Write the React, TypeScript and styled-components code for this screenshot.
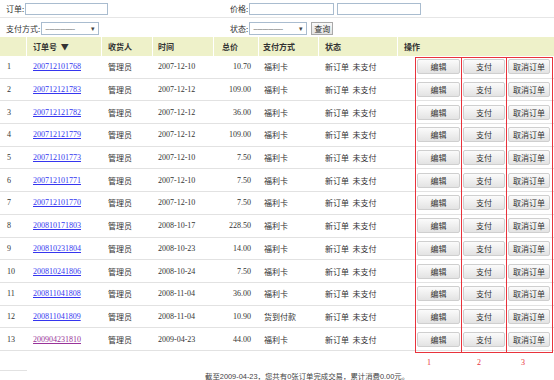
import styled, { createGlobalStyle } from 'styled-components';

const GlobalStyle = createGlobalStyle`
  body {
    margin: 0;
    background: #ffffff;
    font-family: "Liberation Serif", "Noto Sans CJK SC", serif;
    font-size: 8px;
    color: #333333;
  }
`;

const COLS = '27px 75px 51px 61px 45px 60px 79px 156px';

const orders = [
  { no: '200712101768', date: '2007-12-10', total: '10.70', pay: '福利卡' },
  { no: '200712121783', date: '2007-12-12', total: '109.00', pay: '福利卡' },
  { no: '200712121782', date: '2007-12-12', total: '36.00', pay: '福利卡' },
  { no: '200712121779', date: '2007-12-12', total: '109.00', pay: '福利卡' },
  { no: '200712101773', date: '2007-12-10', total: '7.50', pay: '福利卡' },
  { no: '200712101771', date: '2007-12-10', total: '7.50', pay: '福利卡' },
  { no: '200712101770', date: '2007-12-10', total: '7.50', pay: '福利卡' },
  { no: '200810171803', date: '2008-10-17', total: '228.50', pay: '福利卡' },
  { no: '200810231804', date: '2008-10-23', total: '14.00', pay: '福利卡' },
  { no: '200810241806', date: '2008-10-24', total: '7.50', pay: '福利卡' },
  { no: '200811041808', date: '2008-11-04', total: '36.00', pay: '福利卡' },
  { no: '200811041809', date: '2008-11-04', total: '10.90', pay: '货到付款' },
  { no: '200904231810', date: '2009-04-23', total: '44.00', pay: '福利卡', visited: true },
];

const Page = styled.div`
  width: 554px;
  height: 380px;
  overflow: hidden;
`;

const Filters = styled.div`
  display: flex;
  flex-direction: column;
`;

const FilterRow = styled.div<{ $line?: boolean }>`
  display: flex;
  align-items: center;
  height: 17px;
  border-bottom: ${(p) => (p.$line ? '1px solid #e6e6e6' : 'none')};
  margin-bottom: ${(p) => (p.$line ? '2px' : '0')};
`;

const FilterHalf = styled.div<{ $w?: number }>`
  display: flex;
  align-items: center;
  gap: 3px;
  width: ${(p) => (p.$w ? `${p.$w}px` : 'auto')};
  padding-left: 6px;
  box-sizing: border-box;
`;

const Label = styled.span`
  font-family: "Noto Sans CJK SC", sans-serif;
  font-size: 8px;
  color: #333;
  white-space: nowrap;
  margin-right: -2px;
`;

const TextInput = styled.input<{ $w: number }>`
  width: ${(p) => p.$w}px;
  height: 12px;
  box-sizing: border-box;
  border: 1px solid #a9bccf;
  padding: 0;
  margin: 0;
  background: #fff;
`;

const FakeSelect = styled.div<{ $w: number }>`
  width: ${(p) => p.$w}px;
  height: 13px;
  box-sizing: border-box;
  border: 1px solid #a9bccf;
  display: flex;
  align-items: center;
  justify-content: space-between;
  padding: 0 4px 0 3px;
  font-size: 7px;
  color: #444;
  letter-spacing: -0.5px;
`;

const SmallButton = styled.button`
  height: 13px;
  padding: 0 2px;
  margin-left: 1px;
  border: 1px solid #a9a9a9;
  background: linear-gradient(#fafafa, #e2e2e2);
  font-family: "Noto Sans CJK SC", sans-serif;
  font-size: 8px;
  line-height: 11px;
  color: #333;
`;

const TableWrap = styled.div`
  position: relative;
`;

const HeadRow = styled.div`
  display: grid;
  grid-template-columns: ${COLS};
  height: 19px;
  background: #eef1c9;
`;

const HeadCell = styled.div<{ $pad?: number }>`
  display: flex;
  align-items: center;
  padding-left: ${(p) => p.$pad ?? 6}px;
  border-right: 1px solid #ffffff;
  font-family: "Noto Sans CJK SC", sans-serif;
  font-weight: bold;
  font-size: 8px;
  color: #333;
  white-space: nowrap;
  &:last-child {
    border-right: none;
  }
`;

const Row = styled.div`
  display: grid;
  grid-template-columns: ${COLS};
  height: 22.7px;
  box-sizing: border-box;
  border-bottom: 1px solid #e2e2e2;
`;

const Cell = styled.div<{ $pad?: number; $right?: boolean; $cjk?: boolean }>`
  display: flex;
  align-items: center;
  justify-content: ${(p) => (p.$right ? 'flex-end' : 'flex-start')};
  padding-left: ${(p) => (p.$right ? 0 : p.$pad ?? 6)}px;
  padding-right: ${(p) => (p.$right ? 8 : 0)}px;
  font-family: ${(p) =>
    p.$cjk ? '"Noto Sans CJK SC", sans-serif' : '"Liberation Serif", "Noto Sans CJK SC", serif'};
  font-size: 8px;
  color: #333;
  white-space: nowrap;
`;

const OrderLink = styled.a<{ $visited?: boolean }>`
  color: ${(p) => (p.$visited ? '#993399' : '#3535ef')};
  text-decoration: underline;
  font-family: "Liberation Serif", serif;
  font-size: 8px;
`;

const Actions = styled.div`
  display: flex;
  align-items: center;
  gap: 3px;
  padding-left: 19px;
`;

const ActionButton = styled.button<{ $w: number }>`
  width: ${(p) => p.$w}px;
  height: 15px;
  padding: 0;
  border: 1px solid #cfcfcf;
  border-radius: 2px;
  background: linear-gradient(#fbfbfb, #e3e3e3);
  font-family: "Noto Sans CJK SC", sans-serif;
  font-size: 8px;
  color: #333;
`;

/* red annotation frames drawn over the action column */
const Marks = styled.div`
  position: absolute;
  top: 20px;
  left: 415px;
  display: flex;
  height: 296px;
  pointer-events: none;
`;

const MarkBox = styled.div<{ $w: number; $first?: boolean }>`
  width: ${(p) => p.$w}px;
  height: 100%;
  box-sizing: border-box;
  border-top: 1px solid #e8333c;
  border-bottom: 1px solid #e8333c;
  border-right: 1px solid #e8333c;
  border-left: ${(p) => (p.$first ? '1px solid #e8333c' : 'none')};
`;

const MarkLabels = styled.div`
  display: flex;
  padding-left: 427px;
  height: 14px;
  margin-top: 5px;
`;

const MarkLabel = styled.div<{ $w: number }>`
  width: ${(p) => p.$w}px;
  color: #e8333c;
  font-family: "Liberation Serif", serif;
  font-size: 8px;
  line-height: 14px;
`;

const Footer = styled.div`
  display: flex;
  align-items: center;
  height: 12px;
`;

const Stub = styled.div`
  width: 27px;
  border-top: 1px solid #e2e2e2;
  align-self: flex-start;
`;

const Summary = styled.div`
  padding-left: 178px;
  font-family: "Liberation Sans", "Noto Sans CJK SC", sans-serif;
  font-size: 7.4px;
  color: #444;
  white-space: nowrap;
`;

export default function App() {
  return (
    <Page>
      <GlobalStyle />
      <Filters>
        <FilterRow $line>
          <FilterHalf $w={224}>
            <Label>订单:</Label>
            <TextInput $w={83} />
          </FilterHalf>
          <FilterHalf>
            <Label>价格:</Label>
            <TextInput $w={85} />
            <TextInput $w={84} />
          </FilterHalf>
        </FilterRow>
        <FilterRow>
          <FilterHalf $w={224}>
            <Label>支付方式:</Label>
            <FakeSelect $w={58}>
              <span>----------------</span>
              <span>▾</span>
            </FakeSelect>
          </FilterHalf>
          <FilterHalf>
            <Label>状态:</Label>
            <FakeSelect $w={58}>
              <span>----------------</span>
              <span>▾</span>
            </FakeSelect>
            <SmallButton>查询</SmallButton>
          </FilterHalf>
        </FilterRow>
      </Filters>

      <TableWrap>
        <HeadRow>
          <HeadCell />
          <HeadCell>订单号 &nbsp;▼</HeadCell>
          <HeadCell>收货人</HeadCell>
          <HeadCell $pad={5}>时间</HeadCell>
          <HeadCell $pad={8}>总价</HeadCell>
          <HeadCell $pad={4}>支付方式</HeadCell>
          <HeadCell>状态</HeadCell>
          <HeadCell>操作</HeadCell>
        </HeadRow>
        {orders.map((o, i) => (
          <Row key={o.no}>
            <Cell $pad={7}>{i + 1}</Cell>
            <Cell>
              <OrderLink href="#" $visited={o.visited}>
                {o.no}
              </OrderLink>
            </Cell>
            <Cell $cjk>管理员</Cell>
            <Cell $pad={5}>{o.date}</Cell>
            <Cell $right>{o.total}</Cell>
            <Cell $cjk $pad={5}>
              {o.pay}
            </Cell>
            <Cell $cjk>新订单&nbsp;&nbsp;未支付</Cell>
            <Actions>
              <ActionButton $w={43}>编辑</ActionButton>
              <ActionButton $w={42}>支付</ActionButton>
              <ActionButton $w={42}>取消订单</ActionButton>
            </Actions>
          </Row>
        ))}
        <Marks>
          <MarkBox $w={47} $first />
          <MarkBox $w={45} />
          <MarkBox $w={46} />
        </Marks>
      </TableWrap>

      <MarkLabels>
        <MarkLabel $w={50}>1</MarkLabel>
        <MarkLabel $w={44}>2</MarkLabel>
        <MarkLabel $w={10}>3</MarkLabel>
      </MarkLabels>

      <Footer>
        <Stub />
        <Summary>截至2009-04-23，您共有0张订单完成交易，累计消费0.00元。</Summary>
      </Footer>
    </Page>
  );
}
